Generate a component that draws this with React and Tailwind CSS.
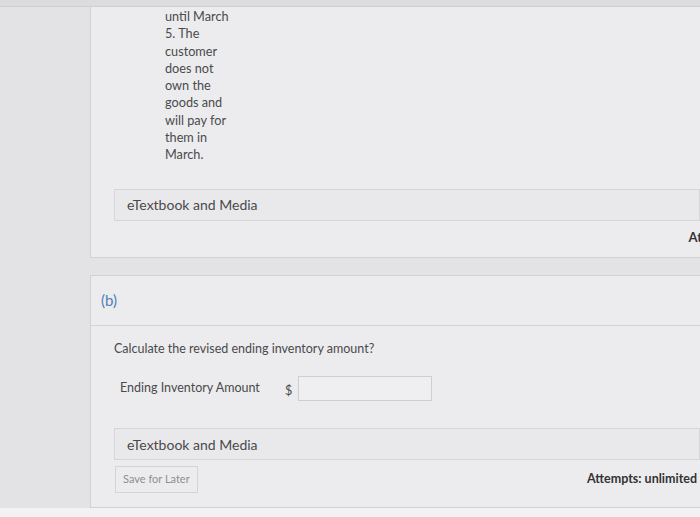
import React from 'react';

const lines = [
  'until March',
  '5. The',
  'customer',
  'does not',
  'own the',
  'goods and',
  'will pay for',
  'them in',
  'March.',
];

const MediaBar = () => (
  <div className="h-[32px] border border-[#d6d6d8] bg-[#e9e9eb] flex items-center pl-[12px] text-[14px] text-[#4a4a4c]">
    eTextbook and Media
  </div>
);

const App = () => {
  return (
    <div
      className="w-[700px] h-[517px] overflow-hidden bg-[#e3e3e5] flex flex-col"
      style={{ fontFamily: 'Lato, "Open Sans", sans-serif' }}
    >
      <div className="h-[7px] bg-[#dcdcde] border-b border-[#cfcfd1] shrink-0" />

      {/* part (a) tail */}
      <div className="ml-[90px] h-[251px] shrink-0 border-l border-b border-[#d2d2d4] bg-[#ececee] flex flex-col">
        <div className="pl-[74px] pt-[1px] text-[12.7px] leading-[17.3px] text-[#4a4a4c]">
          {lines.map((l, i) => (
            <div key={i}>{l}</div>
          ))}
        </div>
        <div className="ml-[23px] mt-[25px]">
          <MediaBar />
        </div>
        <div className="flex justify-end mt-[8px] text-[13px] font-bold text-[#333] leading-[17px] whitespace-nowrap">
          <span className="mr-[-2px]">At</span>
        </div>
      </div>

      <div className="h-[17px] shrink-0" />

      {/* part (b) */}
      <div className="ml-[90px] h-[233px] shrink-0 border-l border-b border-t border-[#d2d2d4] bg-[#ececee] flex flex-col">
        <div className="h-[50px] border-b border-[#d4d4d6] flex items-center pl-[10px] text-[15px] text-[#4f7fb5]">
          (b)
        </div>
        <div className="pl-[23px] pt-[14px] text-[12.5px] text-[#4a4a4c] leading-[17px]">
          Calculate the revised ending inventory amount?
        </div>
        <div className="flex items-center pl-[29px] mt-[19px] text-[12.5px] text-[#4a4a4c]">
          <span className="w-[165px]">Ending Inventory Amount</span>
          <span className="mt-[6px] mr-[6px]">$</span>
          <div className="w-[134px] h-[25px] border border-[#cfcfd1] bg-[#efeff1]" />
        </div>
        <div className="ml-[23px] mt-[27px]">
          <MediaBar />
        </div>
        <div className="flex items-center justify-between ml-[24px] mt-[6px]">
          <button className="h-[27px] px-[7px] border border-[#d4d4d6] bg-[#ececee] text-[11px] text-[#8e8e90]">
            Save for Later
          </button>
          <span className="text-[12.5px] font-bold text-[#333] mr-[3px]">Attempts: unlimited</span>
        </div>
      </div>

      <div className="flex-1 bg-[#f2f2f3]" />
    </div>
  );
};

export default App;
